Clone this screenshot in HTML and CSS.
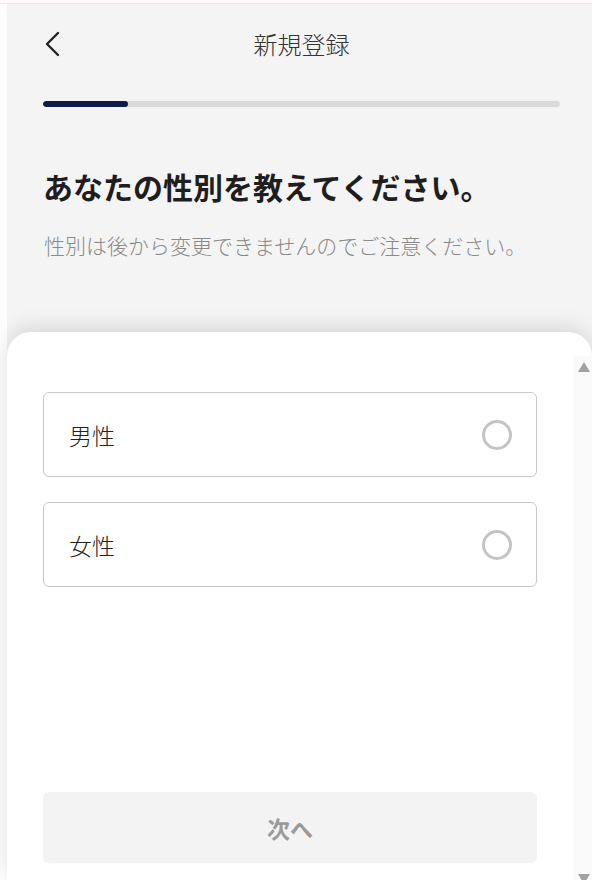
FILE: index.html
```html
<!DOCTYPE html>
<html lang="ja">
<head>
<meta charset="utf-8">
<title>新規登録</title>
<link rel="stylesheet" href="styles.css">
</head>
<body>
<div class="topline"></div>
<div class="page">
  <header class="header">
    <button class="back" aria-label="戻る">
      <svg width="16" height="26" viewBox="0 0 16 26"><polyline points="13,2 2,13 13,24" fill="none" stroke="#222" stroke-width="2.4" stroke-linecap="round" stroke-linejoin="round"/></svg>
    </button>
    <h1 class="title">新規登録</h1>
    <span></span>
  </header>
  <div class="progress"><div class="progress-fill" style="width:16.5%"></div></div>
  <h2 class="heading">あなたの性別を教えてください。</h2>
  <p class="sub">性別は後から変更できませんのでご注意ください。</p>
  <section class="sheet">
    <div class="sheet-main">
      <div class="options">
        <label class="option"><span>男性</span><span class="radio"></span></label>
        <label class="option"><span>女性</span><span class="radio"></span></label>
      </div>
      <button class="next">次へ</button>
    </div>
    <div class="scrollbar">
      <span class="arrow-up"></span>
      <span class="arrow-down"></span>
    </div>
  </section>
</div>
</body>
</html>
```

FILE: styles.css
```css
* { box-sizing: border-box; }
html, body { margin: 0; padding: 0; }
body {
  background: #fff;
  font-family: "Noto Sans CJK JP", "Noto Sans", sans-serif;
  width: 592px;
  height: 880px;
  overflow: hidden;
}
.topline {
  height: 4px;
  background: #fffafa;
  border-bottom: 1px solid #fbe4de;
}
.page {
  margin-left: 7px;
  height: 876px;
  background: #f4f4f4;
  display: flex;
  flex-direction: column;
}
.header {
  height: 80px;
  display: grid;
  grid-template-columns: 1fr auto 1fr;
  align-items: center;
  padding: 0 32px 0 36px;
}
.back {
  background: none;
  border: 0;
  padding: 0;
  margin-left: 2px;
  width: 16px;
  height: 26px;
  display: flex;
}
.title {
  margin: 0;
  font-size: 24px;
  font-weight: 300;
  color: #333;
  line-height: 30px;
}
.progress {
  margin: 17px 32px 0 36px;
  height: 6px;
  border-radius: 3px;
  background: #d9d9d9;
  overflow: hidden;
}
.progress-fill {
  height: 100%;
  background: #0f1c45;
  border-radius: 3px;
}
.heading {
  margin: 59px 0 0 36px;
  font-size: 30px;
  line-height: 40px;
  font-weight: 700;
  color: #1e1e1e;
  white-space: nowrap;
}
.sub {
  margin: 24px 0 0 37px;
  font-size: 21px;
  line-height: 30px;
  font-weight: 300;
  color: #8a8a8a;
  white-space: nowrap;
}
.sheet {
  margin-top: 72px;
  flex: 1;
  background: #fff;
  border-radius: 24px 24px 0 0;
  box-shadow: 0 -4px 22px rgba(0,0,0,0.13);
  padding-top: 24px;
  display: flex;
  min-height: 0;
}
.sheet-main {
  flex: 1;
  display: flex;
  flex-direction: column;
  padding: 36px 36px 17px 36px;
}
.options {
  display: flex;
  flex-direction: column;
  gap: 25px;
}
.option {
  height: 85px;
  border: 1px solid #c8c8c8;
  border-radius: 6px;
  display: flex;
  align-items: center;
  justify-content: space-between;
  padding: 0 24px 0 25px;
  font-size: 23px;
  font-weight: 300;
  color: #222;
}
.radio {
  width: 30px;
  height: 30px;
  border: 3px solid #c4c4c4;
  border-radius: 50%;
}
.next {
  margin-top: auto;
  height: 71px;
  border: 0;
  border-radius: 6px;
  background: #f3f3f3;
  color: #9a9a9a;
  font-family: inherit;
  font-size: 23px;
  font-weight: 700;
}
.scrollbar {
  width: 19px;
  background: #fafafa;
  display: flex;
  flex-direction: column;
  justify-content: space-between;
  align-items: center;
  padding: 6px 0 0 3px;
  margin-bottom: -4px;
}
.arrow-up {
  width: 0; height: 0;
  border-left: 6px solid transparent;
  border-right: 6px solid transparent;
  border-bottom: 10px solid #a2a2a2;
}
.arrow-down {
  width: 0; height: 0;
  border-left: 6px solid transparent;
  border-right: 6px solid transparent;
  border-top: 10px solid #a2a2a2;
}
```
